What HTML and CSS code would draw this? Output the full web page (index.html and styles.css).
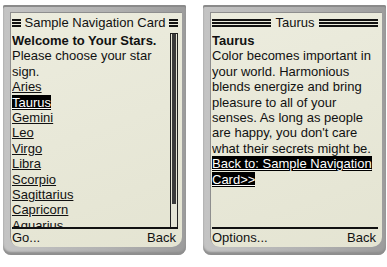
FILE: index.html
```html
<!DOCTYPE html>
<html>

<head>
  <title>Sample Navigation Card</title>
  <link rel="stylesheet" href="styles.css">
</head>

<body>
  <div class="phones">
    <div class="phone">
      <div class="screen">
        <div class="title">
          <span class="bars"></span>
          <span>Sample Navigation Card</span>
          <span class="bars"></span>
        </div>
        <div class="content">
          <div class="text list">
            <b>Welcome to Your Stars.</b><br>
            Please choose your star sign.<br>
            <a href="#">Aries</a><br>
            <a href="#" class="selected">Taurus</a><br>
            <a href="#">Gemini</a><br>
            <a href="#">Leo</a><br>
            <a href="#">Virgo</a><br>
            <a href="#">Libra</a><br>
            <a href="#">Scorpio</a><br>
            <a href="#">Sagittarius</a><br>
            <a href="#">Capricorn</a><br>
            <a href="#">Aquarius</a>
          </div>
          <div class="scrollbar">
            <div class="thumb"></div>
          </div>
        </div>
        <div class="softkeys">
          <span>Go...</span>
          <span>Back</span>
        </div>
      </div>
    </div>

    <div class="phone">
      <div class="screen">
        <div class="title">
          <span class="bars wide"></span>
          <span>Taurus</span>
          <span class="bars wide"></span>
        </div>
        <div class="content">
          <div class="text card">
            <b>Taurus</b><br>
            Color becomes important in your world. Harmonious blends energize and bring pleasure to all of your
            senses. As long as people are happy, you don't care what their secrets might be.<br>
            <a href="#" class="selected">Back to: Sample Navigation Card&gt;&gt;</a>
          </div>
        </div>
        <div class="softkeys">
          <span>Options...</span>
          <span>Back</span>
        </div>
      </div>
    </div>
  </div>
</body>

</html>
```

FILE: styles.css
```css
body {
  margin: 0;
  background-color: white;
  font-family: "Liberation Sans", Arial, sans-serif;
}

.phones {
  display: flex;
  gap: 17px;
  padding: 5px 0 0 3px;
}

.phone {
  flex-shrink: 0;
  width: 183px;
  height: 250px;
  box-sizing: border-box;
  padding: 7px 4px 8px 7px;
  background: linear-gradient(to right, #c4c4c4, #b0b0b0 60%, #9c9c9c);
  border-radius: 2px 2px 8px 8px;
  box-shadow: inset 0 2px 0 #8a8a8a, inset 0 -3px 2px #8e8e8e;
}

.screen {
  height: 235px;
  display: flex;
  flex-direction: column;
  background: linear-gradient(160deg, #ececde, #e4e4d2);
  border-radius: 0 0 10px 10px;
  box-shadow: inset 1px 1px 0 #8e8e8e;
  color: #111;
  font-size: 13px;
  padding: 0 4px 0 2px;
}

.title {
  height: 19px;
  display: flex;
  align-items: center;
  gap: 4px;
  margin-top: 1px;
  white-space: nowrap;
}

.bars {
  display: inline-block;
  width: 9px;
  height: 8px;
  background: repeating-linear-gradient(#111 0 2px, transparent 2px 3px);
}

.bars.wide {
  flex: 1;
}

.content {
  flex: 1;
  display: flex;
  gap: 1px;
  overflow: hidden;
  border-bottom: 2px solid #111;
  padding-top: 1px;
}

.text {
  line-height: 15.4px;
}

.list {
  width: 157px;
}

.card {
  width: 166px;
}

a {
  color: #111;
}

a.selected {
  background-color: #000;
  color: white;
}

.scrollbar {
  width: 6px;
  border: 1px solid #222;
  border-bottom: none;
  background-color: #e6e6d6;
}

.thumb {
  height: 170px;
  background-color: #3a3a3a;
  border: 1px solid #e6e6d6;
  border-top: none;
}

.softkeys {
  display: flex;
  justify-content: space-between;
  height: 18px;
  line-height: 17px;
  padding-right: 2px;
}
```
